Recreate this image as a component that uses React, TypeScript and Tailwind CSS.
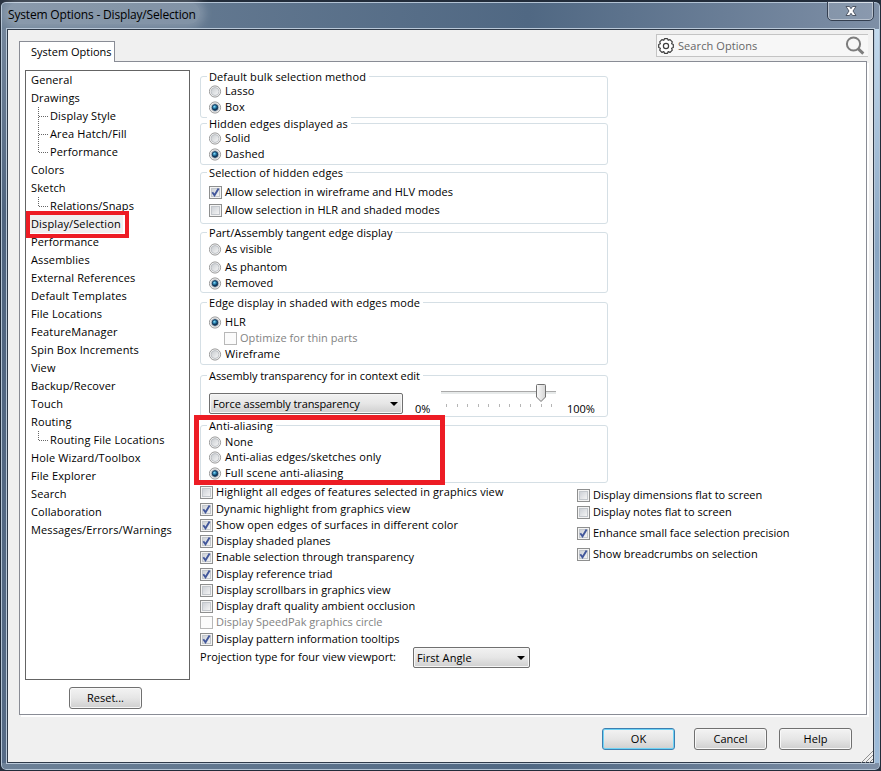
import type { ReactNode } from "react";

type TreeItem = { label: string; child?: boolean; last?: boolean; selected?: boolean };

const treeItems: TreeItem[] = [
  { label: "General" },
  { label: "Drawings" },
  { label: "Display Style", child: true },
  { label: "Area Hatch/Fill", child: true },
  { label: "Performance", child: true, last: true },
  { label: "Colors" },
  { label: "Sketch" },
  { label: "Relations/Snaps", child: true, last: true },
  { label: "Display/Selection", selected: true },
  { label: "Performance" },
  { label: "Assemblies" },
  { label: "External References" },
  { label: "Default Templates" },
  { label: "File Locations" },
  { label: "FeatureManager" },
  { label: "Spin Box Increments" },
  { label: "View" },
  { label: "Backup/Recover" },
  { label: "Touch" },
  { label: "Routing" },
  { label: "Routing File Locations", child: true, last: true },
  { label: "Hole Wizard/Toolbox" },
  { label: "File Explorer" },
  { label: "Search" },
  { label: "Collaboration" },
  { label: "Messages/Errors/Warnings" },
];

type OptionProps = { label: string; checked?: boolean; disabled?: boolean; className?: string };

function Radio({ label, checked, className = "" }: OptionProps) {
  return (
    <label className={`flex h-4 items-center ${className}`}>
      <svg width="13" height="13" viewBox="0 0 13 13" className="mr-[3px] shrink-0">
        <circle cx="6" cy="6.5" r="5.6" fill="#f6f6f6" stroke="#8e8f8f" strokeWidth="0.9" />
        <circle cx="6" cy="6.5" r="4" fill={checked ? "#e8eaec" : "url(#radioFill)"} stroke="#b4b8bc" strokeWidth="0.8" />
        {checked && <circle cx="6" cy="6.5" r="2.9" fill="url(#dotFill)" stroke="#13395c" strokeWidth="0.9" />}
      </svg>
      <span>{label}</span>
    </label>
  );
}

function Checkbox({ label, checked, disabled, className = "" }: OptionProps) {
  return (
    <label className={`flex h-4 items-center ${disabled ? "text-[#838383]" : ""} ${className}`}>
      <svg width="13" height="13" viewBox="0 0 13 13" className="mr-[3px] shrink-0">
        <rect x="0.5" y="0.5" width="12" height="12" fill={disabled ? "#fbfbfb" : "#f4f4f4"} stroke={disabled ? "#b8b8b8" : "#8e8f8f"} />
        {!disabled && <rect x="2.5" y="2.5" width="8" height="8" fill="url(#boxFill)" stroke="#c3c7cc" />}
        {checked && <path d="M3.3 6.2 L5.5 9.2 L9.6 2.6" fill="none" stroke="#42579b" strokeWidth="1.9" />}
      </svg>
      <span>{label}</span>
    </label>
  );
}

function Group({ title, className, children }: { title: string; className: string; children: ReactNode }) {
  return (
    <section className={`w-[408px] rounded-[3px] border border-[#d5dfe5] pl-2 ${className}`}>
      <h2 className="-mt-[7px] -ml-[2px] h-[14px] w-fit bg-white pr-[3px] pl-[2px] leading-[14px]">{title}</h2>
      {children}
    </section>
  );
}

function Select({ value, className }: { value: string; className: string }) {
  return (
    <button
      className={`flex h-[21px] items-center justify-between rounded-[2px] border border-[#707070] bg-linear-to-b from-[#f2f2f2] via-[#e6e6e6] via-50% to-[#cfcfcf] pr-[4px] pl-[3px] shadow-[inset_0_0_0_1px_#f6f6f6] ${className}`}
    >
      <span>{value}</span>
      <svg width="8" height="4" viewBox="0 0 8 4">
        <path d="M0 0H8L4 4Z" fill="#000" />
      </svg>
    </button>
  );
}

function Button({ label, primary }: { label: string; primary?: boolean }) {
  return (
    <button
      className={`flex h-[22px] w-[73px] items-center justify-center rounded-[3px] border bg-linear-to-b from-[#f3f3f3] via-[#e6e6e6] via-50% to-[#cfcfcf] ${
        primary ? "border-[#3c7fb1] shadow-[inset_0_0_0_1px_#6fd3f5]" : "border-[#707070] shadow-[inset_0_0_0_1px_#f8f8f8]"
      }`}
    >
      {label}
    </button>
  );
}

function Slider() {
  return (
    <svg width="116" height="26" viewBox="0 0 116 26" className="mt-px">
      <rect x="0" y="7" width="115" height="3" fill="#e7eaea" />
      <path d="M0 7.5H115" stroke="#a9a9a9" />
      {[5, 16, 26, 37, 47, 58, 68, 79, 89, 100, 110].map((x) => (
        <path key={x} d={`M${x + 0.5} 20V23`} stroke="#b5b5b5" />
      ))}
      <path d="M95.5 1.5 Q95.5 0.5 96.5 0.5 H103.5 Q104.5 0.5 104.5 1.5 V13 L100 17.5 L95.5 13Z" fill="url(#thumbFill)" stroke="#707070" />
    </svg>
  );
}

function Defs() {
  return (
    <svg width="0" height="0" className="absolute">
      <defs>
        <linearGradient id="radioFill" x1="0" y1="0" x2="1" y2="1">
          <stop offset="0" stopColor="#c6cace" />
          <stop offset="1" stopColor="#f8f8f8" />
        </linearGradient>
        <radialGradient id="dotFill" cx="0.4" cy="0.35">
          <stop offset="0" stopColor="#8fdcf5" />
          <stop offset="0.55" stopColor="#2784b3" />
          <stop offset="1" stopColor="#12395a" />
        </radialGradient>
        <linearGradient id="boxFill" x1="0" y1="0" x2="1" y2="1">
          <stop offset="0" stopColor="#cbcfd5" />
          <stop offset="1" stopColor="#f6f6f6" />
        </linearGradient>
        <linearGradient id="thumbFill">
          <stop offset="0" stopColor="#fafafa" />
          <stop offset="1" stopColor="#d4d4d4" />
        </linearGradient>
      </defs>
    </svg>
  );
}

function TitleBar() {
  return (
    <header className="flex h-[27px] items-start justify-between px-[6px]">
      <div className="h-[22px] rounded-full bg-white/20 pr-1 pl-px text-[12px] leading-[26px] tracking-[-0.17px] shadow-[0_0_8px_5px_rgba(255,255,255,0.2)]">
        System Options - Display/Selection
      </div>
      <button className="-mt-px flex h-[20px] w-[47px] items-center justify-center rounded-b-[5px] border border-[#343f50] bg-white/10 shadow-[inset_0_0_0_1px_rgba(255,255,255,0.4)]">
        <svg width="12" height="10" viewBox="0 0 12 10">
          <path d="M1 .5H4.5L6 2.7L7.5 .5H11L8 5L11 9.5H7.5L6 7.3L4.5 9.5H1L4 5Z" fill="#fff" stroke="#454d5b" strokeWidth="0.9" />
        </svg>
      </button>
    </header>
  );
}

function SearchBox() {
  return (
    <div className="mr-[5px] flex h-[23px] w-[212px] items-center border border-r-0 border-[#c4c4c4] bg-[#f7f7f7] pr-[3px] pl-[1px] text-[#666]">
      <svg width="16" height="16" viewBox="0 0 16 16">
        <path
          d="M6.5 .7H9.5L10.2 2.3L12 1.6L14.3 3.9L13.6 5.8L15.3 6.5V9.5L13.6 10.2L14.3 12.1L12.1 14.4L10.2 13.6L9.5 15.3H6.5L5.8 13.6L3.9 14.4L1.7 12.1L2.4 10.2L.7 9.5V6.5L2.4 5.8L1.7 3.9L3.9 1.6L5.8 2.3Z"
          fill="#fff"
          stroke="#3d3d3d"
          strokeWidth="1.2"
          strokeLinejoin="round"
        />
        <circle cx="8" cy="8" r="2.6" fill="none" stroke="#3d3d3d" strokeWidth="1.2" />
      </svg>
      <span className="ml-[4px] flex-1 tracking-[0.08px]">Search Options</span>
      <svg width="20" height="20" viewBox="0 0 20 20" fill="none" stroke="#7d7d7d">
        <circle cx="8.5" cy="8" r="6.6" strokeWidth="2" />
        <path d="M13 12.7L18.3 17.6" strokeWidth="3" />
      </svg>
    </div>
  );
}

function TreeList() {
  return (
    <nav className="relative h-[610px] w-[165px] border border-[#646464] bg-white pl-[5px] tracking-[0.13px]">
      {treeItems.map((item, i) => (
        <div key={i} className="flex h-[18px] items-center">
          {item.child && (
            <svg width="19" height="18" viewBox="0 0 19 18" stroke="#666" strokeDasharray="1 1">
              <path d={item.last ? "M7.5 0V10" : "M7.5 0V18"} />
              <path d="M8 9.5H17" />
            </svg>
          )}
          <span className={item.selected ? "-ml-px h-[18px] bg-[#efefef] pr-[2px] pl-px leading-[18px]" : ""}>{item.label}</span>
        </div>
      ))}
      <div className="absolute top-[140px] left-0 h-[27px] w-[103px] border-4 border-[#ed1c24]" />
    </nav>
  );
}

export default function App() {
  return (
    <div className="h-[771px] w-[881px] overflow-hidden bg-[#26303e] font-['Open_Sans','Noto_Sans',sans-serif] text-[11px] leading-[14px] whitespace-nowrap text-black">
      <Defs />
      <div className="h-[771px] w-[881px] rounded-[6px] border border-t-2 border-[#222c3a] bg-linear-to-r from-[#6d8197] via-[#506883] via-60% to-[#7e8fa6] shadow-[inset_0_0_0_1px_#b3c3d4]">
        <TitleBar />

        <div className="flex">
          {/* Glass frame, left edge */}
          <div className="ml-px h-[734px] w-[5px] bg-linear-to-b from-[#74869c] via-[#506580] via-25% to-[#566b86]" />

          <main className="flex h-[734px] w-[867px] flex-col border border-[#2f3a49] bg-[#f0f0f0] pl-[11px] outline-1 outline-[#b9c8d8]">
            <div className="flex h-[31px] items-start justify-between pt-[4px]">
              <div className="relative mt-[7px] h-[21px] w-[96px] border border-b-0 border-[#898c95] bg-white pl-[11px] leading-[19px]">
                System Options
              </div>
              <SearchBox />
            </div>

            <div className="flex h-[654px] w-[848px] border border-[#898c95] bg-white shadow-[2px_2px_0_#fff]">
              <div className="flex w-[175px] flex-col pt-[8px] pl-[5px]">
                <TreeList />
                <div className="mt-[7px] ml-[44px]">
                  <Button label="Reset..." />
                </div>
              </div>

              <div className="relative flex w-[671px] flex-col pt-[14px] pl-[5px] tracking-[0.1px]">
                <Group title="Default bulk selection method" className="h-[42px]">
                  <Radio label="Lasso" className="-mt-px" />
                  <Radio label="Box" checked />
                </Group>
                <Group title="Hidden edges displayed as" className="mt-[5px] h-[42px]">
                  <Radio label="Solid" className="-mt-px" />
                  <Radio label="Dashed" checked />
                </Group>
                <Group title="Selection of hidden edges" className="mt-[7px] h-[52px]">
                  <Checkbox label="Allow selection in wireframe and HLV modes" checked className="mt-1 tracking-[0.01px]" />
                  <Checkbox label="Allow selection in HLR and shaded modes" className="mt-[2px] tracking-[0.05px]" />
                </Group>
                <Group title="Part/Assembly tangent edge display" className="mt-2 h-[61px] tracking-[0.01px]">
                  <Radio label="As visible" className="mt-px" />
                  <Radio label="As phantom" className="mt-[2px]" />
                  <Radio label="Removed" checked />
                </Group>
                <Group title="Edge display in shaded with edges mode" className="mt-[9px] h-[63px]">
                  <Radio label="HLR" checked className="mt-1" />
                  <Checkbox label="Optimize for thin parts" disabled className="ml-[15px] tracking-[0.05px]" />
                  <Radio label="Wireframe" />
                </Group>
                <Group title="Assembly transparency for in context edit" className="mt-[10px] h-[42px] tracking-[-0.05px]">
                  <div className="flex items-start">
                    <Select value="Force assembly transparency" className="mt-[10px] w-[194px] tracking-[-0.1px]" />
                    <span className="mt-[19px] ml-[12px] w-[26px]">0%</span>
                    <Slider />
                    <span className="mt-[19px] ml-[10px]">100%</span>
                  </div>
                </Group>
                <Group title="Anti-aliasing" className="mt-2 h-[58px]">
                  <Radio label="None" className="mt-px" />
                  <Radio label="Anti-alias edges/sketches only" className="-mt-px" />
                  <Radio label="Full scene anti-aliasing" checked className="tracking-[0.14px]" />
                </Group>

                <div className="flex tracking-[0.01px]">
                  <div className="w-[377px] pt-px">
                    <Checkbox label="Highlight all edges of features selected in graphics view" className="tracking-[0.1px]" />
                    <Checkbox label="Dynamic highlight from graphics view" checked className="mt-px tracking-[0.07px]" />
                    <Checkbox label="Show open edges of surfaces in different color" checked className="tracking-[0.1px]" />
                    <Checkbox label="Display shaded planes" checked />
                    <Checkbox label="Enable selection through transparency" checked />
                    <Checkbox label="Display reference triad" checked className="mt-px" />
                    <Checkbox label="Display scrollbars in graphics view" />
                    <Checkbox label="Display draft quality ambient occlusion" />
                    <Checkbox label="Display SpeedPak graphics circle" disabled />
                    <Checkbox label="Display pattern information tooltips" checked className="mt-px" />
                    <div className="flex">
                      <span className="mt-[3px] w-[213px]">Projection type for four view viewport:</span>
                      <Select value="First Angle" className="w-[117px] tracking-[0.1px]" />
                    </div>
                  </div>
                  <div className="pt-[4px]">
                    <Checkbox label="Display dimensions flat to screen" />
                    <Checkbox label="Display notes flat to screen" className="mt-px" />
                    <Checkbox label="Enhance small face selection precision" checked className="mt-[5px]" />
                    <Checkbox label="Show breadcrumbs on selection" checked className="mt-[5px]" />
                  </div>
                </div>

                {/* Anti-aliasing highlight */}
                <div className="absolute top-[353px] -left-px h-[70px] w-[251px] border-5 border-[#ed1c24]" />
              </div>
            </div>

            <footer className="relative flex pt-[13px] pl-[583px]">
              <Button label="OK" primary />
              <div className="ml-[19px]">
                <Button label="Cancel" />
              </div>
              <div className="ml-[12px]">
                <Button label="Help" />
              </div>
              <svg width="12" height="12" viewBox="0 0 12 12" className="absolute top-[36px] right-0" stroke="#8f8f8f">
                <path d="M0 12L12 0M4 12L12 4M8 12L12 8" />
              </svg>
            </footer>
          </main>

          {/* Glass frame, right edge */}
          <div className="ml-px h-[734px] w-[4px] bg-linear-to-b from-[#c3daee] via-[#8aa6c3] via-30% to-[#9dbbd9]" />
        </div>
      </div>
    </div>
  );
}
